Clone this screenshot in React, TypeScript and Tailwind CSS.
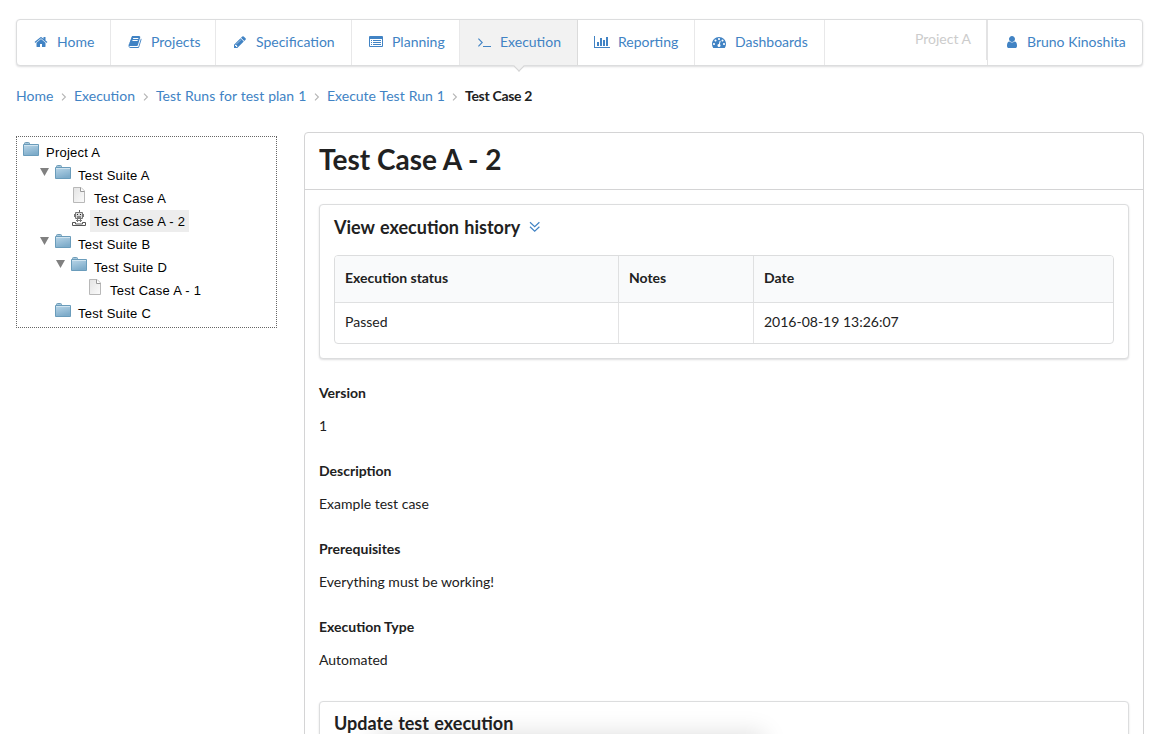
import React from "react";

const HOME =
  "M1472 992v480q0 26-19 45t-45 19h-384v-384h-256v384h-384q-26 0-45-19t-19-45v-480q0-1 .5-3t.5-3l575-474 575 474q1 2 1 6zm223-69l-62 74q-8 9-21 11h-3q-13 0-21-7l-692-577-692 577q-12 8-24 7-13-2-21-11l-62-74q-8-10-7-23.5t11-21.5l719-599q32-26 76-26t76 26l244 204v-195q0-14 9-23t23-9h192q14 0 23 9t9 23v408l219 182q10 8 11 21.5t-7 23.5z";
const BOOK =
  "M1703 478q40 57 18 129l-275 906q-19 64-76.5 107.5t-122.5 43.5h-923q-77 0-148.5-53.5t-99.5-131.5q-24-67-2-127 0-4 3-27t4-37q1-8-3-21.5t-3-19.5q2-11 8-21t16.5-23.5 16.5-23.5q23-38 45-91.5t30-91.5q3-10 .5-30t-.5-28q3-11 17-28t17-23q21-36 42-92t25-90q1-9-2.5-32t.5-28q4-13 22-30.5t22-22.5q19-26 42.5-84.5t27.5-96.5q1-8-3-25.5t-2-26.5q2-8 9-18t18-23 17-21q8-12 16.5-30.5t15-35 16-36 19.5-32 26.5-23.5 36-11.5 47.5 5.5l-1 3q38-9 51-9h761q74 0 114 56t18 130l-274 906q-36 119-71.5 153.5t-128.5 34.5h-869q-27 0-38 15-11 16-1 43 24 70 144 70h923q29 0 56-15.5t35-41.5l300-987q7-22 5-57 38 15 59 43zm-1064 2q-4 13 2 22.5t20 9.5h608q13 0 25.5-9.5t16.5-22.5l21-64q4-13-2-22.5t-20-9.5h-608q-13 0-25.5 9.5t-16.5 22.5zm-83 256q-4 13 2 22.5t20 9.5h608q13 0 25.5-9.5t16.5-22.5l21-64q4-13-2-22.5t-20-9.5h-608q-13 0-25.5 9.5t-16.5 22.5z";
const PENCIL =
  "M491 1536l91-91-235-235-91 91v107h128v128h107zm523-928q0-22-22-22-10 0-17 7l-542 542q-7 7-7 17 0 22 22 22 10 0 17-7l542-542q7-7 7-17zm-54-192l416 416-832 832h-416v-416zm683 96q0 53-37 90l-166 166-416-416 166-165q36-38 90-38 53 0 91 38l235 234q37 39 37 91z";
const DOT = "q0-53-37.5-90.5t-90.5-37.5-90.5 37.5-37.5 90.5 37.5 90.5 90.5 37.5 90.5-37.5 37.5-90.5z";
const GAUGE =
  `M384 1152${DOT}M576 704${DOT}` +
  "M1004 1185l101-382q6-26-7.5-48.5t-38.5-29.5-48 6.5-30 39.5l-101 382q-60 5-107 43.5t-63 98.5q-20 77 20 146t117 89 146-20 89-117q16-60-6-117t-72-91z" +
  `M1664 1152${DOT}M1024 512${DOT}M1472 704${DOT}` +
  "M1792 1152q0 261-141 483-19 29-54 29h-1402q-35 0-54-29-141-221-141-483 0-182 71-348t191-286 286-191 348-71 348 71 286 191 191 286 71 348z";
const USER =
  "M1536 1399q0 109-62.5 187t-150.5 78h-854q-88 0-150.5-78t-62.5-187q0-85 8.5-160.5t31.5-152 58.5-131 94-89 134.5-34.5q131 128 313 128t313-128q76 0 134.5 34.5t94 89 58.5 131 31.5 152 8.5 160.5zm-256-887q0 159-112.5 271.5t-271.5 112.5-271.5-112.5-112.5-271.5 112.5-271.5 271.5-112.5 271.5 112.5 112.5 271.5z";

function Glyph({ d }: { d: string }) {
  return (
    <svg width="14" height="14" viewBox="0 0 1792 1792" fill="currentColor" fillRule="evenodd">
      <path d={d} />
    </svg>
  );
}

const ListIcon = () => (
  <svg width="14" height="14" viewBox="0 0 14 14" fill="currentColor">
    <path
      fillRule="evenodd"
      d="M1 1h12a1 1 0 0 1 1 1v9a1 1 0 0 1-1 1H1a1 1 0 0 1-1-1V2a1 1 0 0 1 1-1zM1 4v7h12V4zM2 5h1v1H2zM4 5h8v1H4zM2 7h1v1H2zM4 7h8v1H4zM2 9h1v1H2zM4 9h8v1H4z"
    />
  </svg>
);
const TerminalIcon = () => (
  <svg width="14" height="14" viewBox="0 0 14 14" fill="none" stroke="currentColor">
    <path d="M1.4 3.7l3.8 3.8-3.8 3.8" strokeWidth="1.1" />
    <path d="M6 11.5h8" />
  </svg>
);
const ChartIcon = () => (
  <svg width="16" height="14" viewBox="0 0 16 14" fill="currentColor" shapeRendering="crispEdges">
    <path d="M0 1h1v11h15v1H0zM3 7h2v4H3zM6 3h2v8H6zM9 5h2v6H9zM12 2h2v9h-2z" />
  </svg>
);

interface NavItem {
  label: string;
  width: string;
  icon: React.ReactNode;
  active?: boolean;
}

const NAV: NavItem[] = [
  { label: "Home", width: "w-[94px]", icon: <Glyph d={HOME} /> },
  { label: "Projects", width: "w-[105px]", icon: <Glyph d={BOOK} /> },
  { label: "Specification", width: "w-[136px]", icon: <Glyph d={PENCIL} /> },
  { label: "Planning", width: "w-[108px]", icon: <ListIcon /> },
  { label: "Execution", width: "w-[118px]", icon: <TerminalIcon />, active: true },
  { label: "Reporting", width: "w-[117px]", icon: <ChartIcon /> },
  { label: "Dashboards", width: "w-[130px]", icon: <Glyph d={GAUGE} /> },
];

function NavBar() {
  return (
    <nav className="flex h-[47px] w-[1127px] shrink-0 rounded border border-[#dcddde] bg-white text-[#4183c4] shadow-[0_1px_2px_rgba(34,36,38,0.15)]">
      {NAV.map((n) => (
        <a
          key={n.label}
          className={`relative flex shrink-0 items-center border-r pb-px pl-4 ${n.width} ${
            n.active ? "border-[#dbdbdb] bg-[#f2f2f2]" : "border-[#e8e8e9]"
          }`}
        >
          <span className="mr-[7px] flex w-4 justify-center">{n.icon}</span>
          <span className="ml-px whitespace-nowrap">{n.label}</span>
          {n.active && (
            <span className="absolute top-[42px] left-[55px] size-2 rotate-45 border-r border-b border-[#d4d4d5] bg-[#f2f2f2]" />
          )}
        </a>
      ))}
      <div className="ml-auto flex h-10 items-center border-r border-[#e3e3e4] pr-[15px] pb-[3px] text-[#cccccc]">Project A</div>
      <a className="flex w-[155px] items-center border-l border-[#e3e3e4] pb-px pl-4">
        <span className="mr-[7px] flex w-4 justify-center">
          <Glyph d={USER} />
        </span>
        <span className="whitespace-nowrap">Bruno Kinoshita</span>
      </a>
    </nav>
  );
}

const CRUMBS = [
  { label: "Home", width: "w-[58px]" },
  { label: "Execution", width: "w-[82px]" },
  { label: "Test Runs for test plan 1", width: "w-[171px]" },
  { label: "Execute Test Run 1", width: "w-[138px]" },
];

function Breadcrumb() {
  return (
    <div className="mt-5 flex h-5 shrink-0 items-center">
      {CRUMBS.map((c) => (
        <span key={c.label} className={`flex items-center justify-between pr-[7px] ${c.width}`}>
          <a className="whitespace-nowrap text-[#4183c4] [word-spacing:0.45px]">{c.label}</a>
          <svg width="6" height="8" viewBox="0 0 6 8" fill="none" stroke="#b4b4b4" strokeWidth="1.1" className="mt-[2px]">
            <path d="M1 .6L4.4 4 1 7.4" />
          </svg>
        </span>
      ))}
      <span className="font-bold tracking-[-0.3px] whitespace-nowrap">Test Case 2</span>
    </div>
  );
}

const Folder = () => (
  <svg width="16" height="14" viewBox="0 0 16 14">
    <defs>
      <linearGradient id="folderFill" x1="0" y1="0" x2="0.4" y2="1">
        <stop offset="0" stopColor="#bbd7e9" />
        <stop offset="1" stopColor="#7eacca" />
      </linearGradient>
    </defs>
    <path d="M1.5 3V1.5Q1.5.5 2.5.5h3q1 0 1 1V3z" fill="#a5c7dc" stroke="#6f9cb8" />
    <path d="M.5 2.5h15v11H.5z" fill="url(#folderFill)" stroke="#6a9cbb" />
    <path d="M1 3.5h14" stroke="#d0e4f0" />
  </svg>
);
const File = () => (
  <svg width="12" height="16" viewBox="0 0 12 16">
    <defs>
      <linearGradient id="fileFill" x1="0" y1="0" x2="1" y2="1">
        <stop offset="0" stopColor="#e3e3e3" />
        <stop offset="1" stopColor="#fbfbfb" />
      </linearGradient>
    </defs>
    <path d="M.5.5H8L11.5 4v11.5H.5z" fill="url(#fileFill)" stroke="#b8b8b8" />
    <path d="M7.500.5v4h4" fill="#fff" stroke="#999" />
  </svg>
);
const Robot = () => (
  <svg width="14" height="17" viewBox="0 0 14 17" fill="none" stroke="#666">
    <path d="M7.500 0v3" />
    <path d="M3.500 2.500h7v6h-7z" fill="#dcdcdc" stroke="#777" />
    <path d="M2.500 4v3M11.500 4v3" stroke="#777" />
    <path d="M5 4.500h1M8 4.500h1" stroke="#222" />
    <path d="M5 7h4" stroke="#333" />
    <path d="M5.500 9v3M8.500 9v3M4 10.500h6" stroke="#777" />
    <path d="M.5 12.500h3v1.500h7v-1.500h3v3H.5z" fill="#fff" stroke="#555" />
  </svg>
);

type Kind = "folder" | "file" | "robot";
interface Node {
  label: string;
  pad: string;
  kind: Kind;
  open?: boolean;
  selected?: boolean;
}

const TREE: Node[] = [
  { label: "Project A", pad: "pl-[5px]", kind: "folder" },
  { label: "Test Suite A", pad: "pl-[21px]", kind: "folder", open: true },
  { label: "Test Case A", pad: "pl-[53px]", kind: "file" },
  { label: "Test Case A - 2", pad: "pl-[53px]", kind: "robot", selected: true },
  { label: "Test Suite B", pad: "pl-[21px]", kind: "folder", open: true },
  { label: "Test Suite D", pad: "pl-[37px]", kind: "folder", open: true },
  { label: "Test Case A - 1", pad: "pl-[69px]", kind: "file" },
  { label: "Test Suite C", pad: "pl-[37px]", kind: "folder" },
];

function Tree() {
  return (
    <aside className="mt-1 h-[192px] w-[261px] border border-dotted border-[#666] pt-1 font-['Liberation_Sans',Arial,sans-serif] text-[13px] tracking-[0.25px] text-black">
      {TREE.map((n) => (
        <div key={n.label} className={`flex h-[23px] items-start ${n.pad}`}>
          {n.open && (
            <svg width="16" height="16" viewBox="0 0 16 16" fill="#808080">
              <path d="M2 4h9L6.500 12z" />
            </svg>
          )}
          <span className={`flex w-5 shrink-0 ${n.kind === "folder" ? "pt-px pl-px" : n.kind === "file" ? "pl-[3px]" : "pl-[2px]"}`}>
            {n.kind === "folder" ? <Folder /> : n.kind === "file" ? <File /> : <Robot />}
          </span>
          <span className={`h-[22px] px-1 leading-[24px] whitespace-nowrap ${n.selected ? "bg-[#ededed]" : ""}`}>
            {n.label}
          </span>
        </div>
      ))}
    </aside>
  );
}

const FIELDS = [
  ["Version", "1"],
  ["Description", "Example test case"],
  ["Prerequisites", "Everything must be working!"],
  ["Execution Type", "Automated"],
];

const CARD = "rounded border border-[#dcddde] bg-white px-[14px] shadow-[0_1px_2px_rgba(34,36,38,0.15)]";

function History() {
  return (
    <section className={`h-[155px] ${CARD}`}>
      <h2 className="flex h-[50px] items-start pt-[10px] text-[18px] leading-6 font-bold [word-spacing:1px]">
        View execution history
        <svg width="12" height="12" viewBox="0 0 12 12" fill="none" stroke="#4183c4" strokeWidth="1.2" className="mt-[6px] ml-[9px]">
          <path d="M1 1.200l4.700 4.500L10.400 1.200M1 5.700l4.700 4.500 4.700-4.500" />
        </svg>
      </h2>
      <div className="grid h-[89px] grid-cols-[284px_135px_1fr] grid-rows-[47px_40px] overflow-hidden rounded border border-[#dcddde]">
        {["Execution status", "Notes", "Date"].map((h, i) => (
          <div
            key={h}
            className={`flex items-center border-b border-[#dfe0e1] bg-[#f9fafb] px-[10px] pb-[2px] font-bold ${i < 2 ? "border-r" : ""}`}
          >
            {h}
          </div>
        ))}
        {["Passed", "", "2016-08-19 13:26:07"].map((v, i) => (
          <div key={i} className={`flex items-center border-[#e3e3e4] px-[10px] pb-[3px] ${i < 2 ? "border-r" : ""}`}>
            {v}
          </div>
        ))}
      </div>
    </section>
  );
}

export default function App() {
  return (
    <div className="relative flex h-[734px] w-[1160px] flex-col overflow-hidden bg-white pt-[19px] pl-4 font-[Lato,sans-serif] text-[14px] leading-5 text-[#212121]">
      <NavBar />
      <Breadcrumb />
      <div className="mt-[26px] flex items-start">
        <Tree />
        <main className="ml-[27px] h-[640px] w-[840px] rounded-t border border-[#d4d4d5]">
          <h1 className="h-[57px] border-b border-[#d4d4d5] pt-2 pl-[14px] text-[28px] leading-9 font-bold">
            Test Case A - 2
          </h1>
          <div className="px-[14px] pt-[14px]">
            <History />
            <dl className="mt-6">
              {FIELDS.map(([k, v]) => (
                <div key={k} className="h-[78px]">
                  <dt className="font-bold">{k}</dt>
                  <dd className="mt-[13px]">{v}</dd>
                </div>
              ))}
            </dl>
            <section className={`mt-[6px] h-20 ${CARD}`}>
              <h2 className="pt-[9px] text-[18px] leading-6 font-bold [word-spacing:1px]">Update test execution</h2>
            </section>
          </div>
        </main>
      </div>
      <div className="absolute top-[739px] left-[380px] h-10 w-[378px] shadow-[0_0_24px_6px_rgba(0,0,0,0.13)]" />
    </div>
  );
}
